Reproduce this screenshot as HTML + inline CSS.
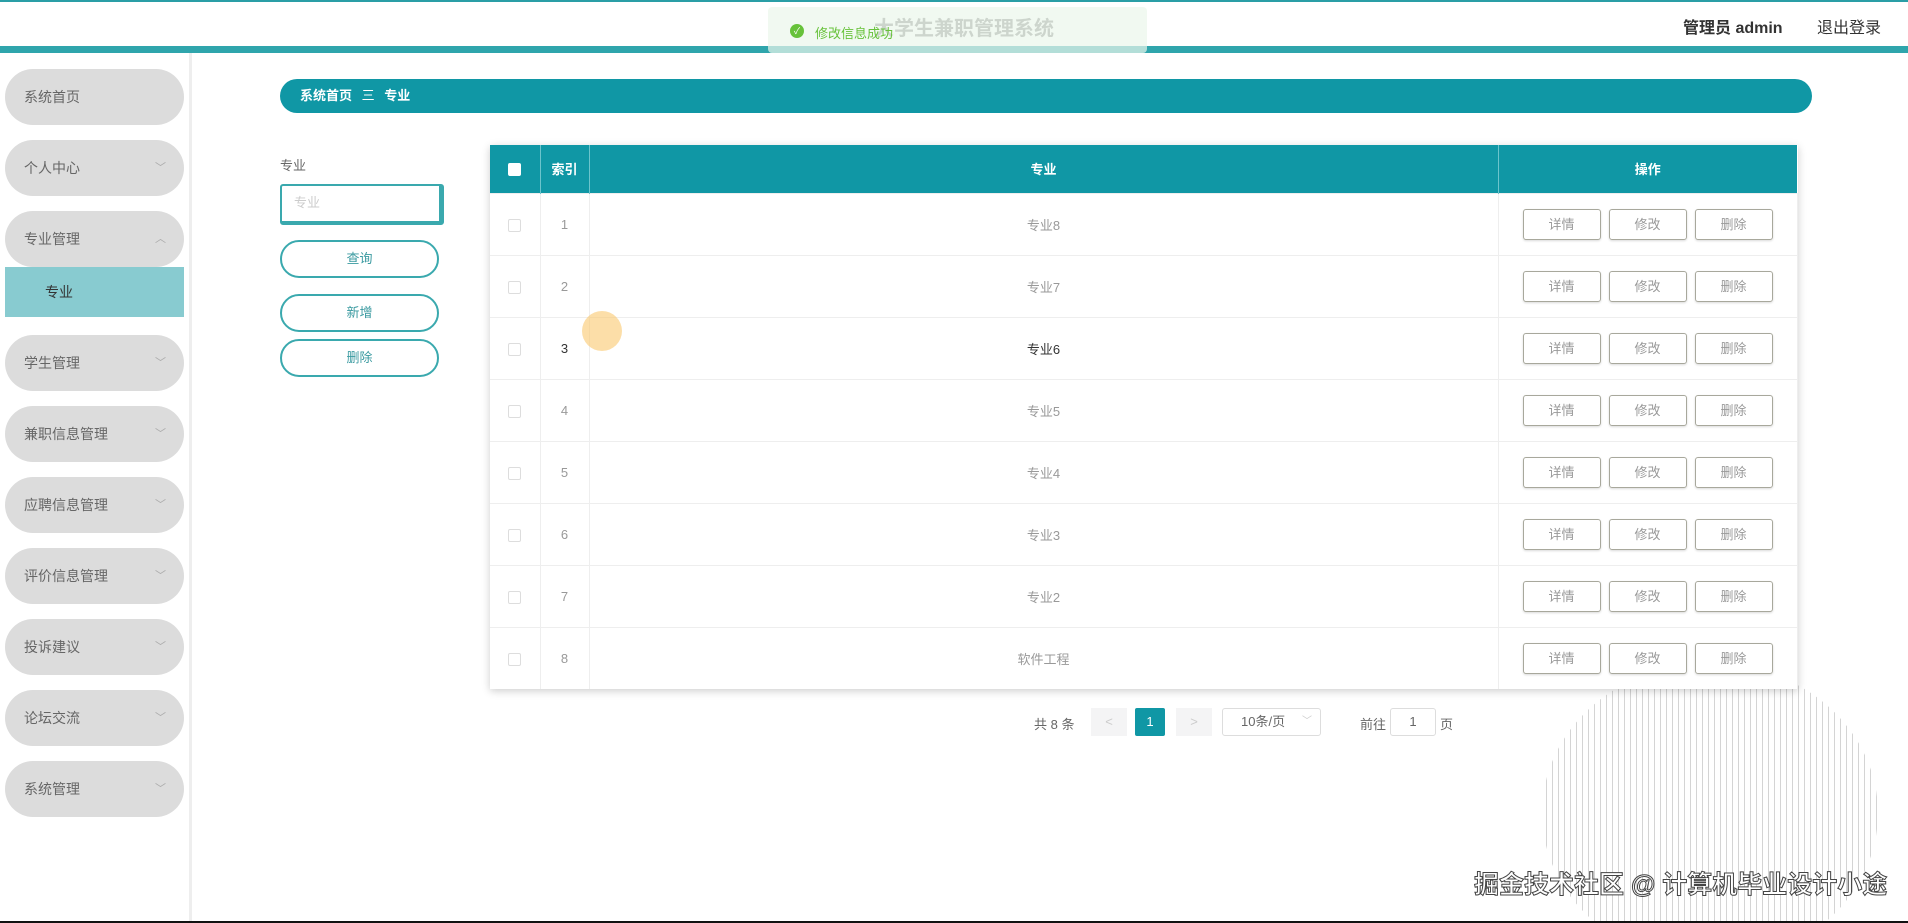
<!DOCTYPE html>
<html style="overflow:hidden;height:923px"><head><meta charset="utf-8"><style>
*{margin:0;padding:0;box-sizing:border-box}
body{width:1908px;height:923px;position:relative;overflow:hidden;background:#fff;font-family:"Liberation Sans","Noto Sans CJK SC",sans-serif;font-size:13px;color:#666}
.a{position:absolute}
.pill{position:absolute;left:5px;width:179px;height:56px;border-radius:28px;background:#dcdcdc;color:#666;font-size:14px;line-height:56px;padding-left:19px}
.pill i{position:absolute;left:150px;top:0;font-style:normal;color:#aaa;font-size:11px}
.btn{position:absolute;left:280px;width:159px;height:38px;border:2px solid #3aa9ae;border-radius:19px;text-align:center;line-height:34px;color:#3a9aa0;font-size:13px}
table{border-collapse:collapse;position:absolute;left:490px;top:145px;width:1307px;box-shadow:0 2px 8px rgba(0,0,0,.2);table-layout:fixed;background:#fff}
th{background:#1097a5;color:#fff;height:48px;font-size:13px;border-right:1px solid #6cc4cc}
td{height:62px;border-top:1px solid #eee;border-right:1px solid #eee;text-align:center;color:#999;font-size:13px}
.cb{display:inline-block;width:13px;height:13px;border:1px solid #ddd;border-radius:2px;vertical-align:middle}
.ob{display:inline-block;width:78px;height:31px;border:1px solid #a8a89c;border-radius:3px;line-height:29px;color:#999;margin:0 4px;box-shadow:0 1px 2px rgba(0,0,0,.15)}
</style></head><body>
<div class="a" style="left:0;top:0;width:1908px;height:2px;background:#2a9ea6"></div>
<div class="a" style="left:0;top:46px;width:1908px;height:7px;background:#2fa5ac"></div>
<div class="a" style="left:874px;top:12px;font-size:20px;color:#888;font-weight:bold">大学生兼职管理系统</div>
<div class="a" style="left:768px;top:7px;width:379px;height:46px;background:rgba(235,247,235,.7);border-radius:4px"></div>
<div class="a" style="left:790px;top:24px;width:14px;height:14px;border-radius:50%;background:#67c23a;color:#fff;font-size:9px;text-align:center;line-height:14px">✓</div>
<div class="a" style="left:815px;top:23px;color:#67c23a;font-size:13px">修改信息成功</div>
<div class="a" style="left:1683px;top:14px;font-size:16px;color:#333;font-weight:bold">管理员 admin</div>
<div class="a" style="left:1817px;top:14px;font-size:16px;color:#333">退出登录</div>

<div class="a" style="left:189px;top:53px;width:3px;height:868px;background:#eee"></div>
<div class="pill" style="top:69px">系统首页</div>
<div class="pill" style="top:140px">个人中心<i>﹀</i></div>
<div class="pill" style="top:211px">专业管理<i>︿</i></div>
<div class="a" style="left:5px;top:267px;width:179px;height:50px;background:#88cbd0;color:#333;font-size:14px;line-height:50px;padding-left:40px">专业</div>
<div class="pill" style="top:335px">学生管理<i>﹀</i></div>
<div class="pill" style="top:406px">兼职信息管理<i>﹀</i></div>
<div class="pill" style="top:477px">应聘信息管理<i>﹀</i></div>
<div class="pill" style="top:548px">评价信息管理<i>﹀</i></div>
<div class="pill" style="top:619px">投诉建议<i>﹀</i></div>
<div class="pill" style="top:690px">论坛交流<i>﹀</i></div>
<div class="pill" style="top:761px">系统管理<i>﹀</i></div>

<div class="a" style="left:280px;top:79px;width:1532px;height:34px;border-radius:17px;background:#1097a5;color:#fff;font-weight:bold;font-size:13px;line-height:34px;padding-left:20px">系统首页 <span style="font-weight:normal;margin:0 6px">三</span> 专业</div>

<div class="a" style="left:280px;top:155px;color:#666;font-size:13px">专业</div>
<div class="a" style="left:280px;top:184px;width:164px;height:41px;border:2px solid #3aa9ae;border-right-width:5px;border-bottom-width:4px;border-radius:3px;color:#ccc;font-size:13px;line-height:34px;padding-left:12px">专业</div>
<div class="btn" style="top:240px">查询</div>
<div class="btn" style="top:294px">新增</div>
<div class="btn" style="top:339px">删除</div>

<div class="a" style="left:1540px;top:663px;width:340px;height:258px;background:repeating-linear-gradient(90deg,#d4d4d4 0 1px,transparent 1px 6px);clip-path:ellipse(168px 150px at 170px 150px)"></div>

<table>
<colgroup><col style="width:50px"><col style="width:49px"><col style="width:909px"><col style="width:299px"></colgroup>
<tr><th><span class="cb" style="background:#fff;border-color:#fff"></span></th><th>索引</th><th>专业</th><th style="border-right:0">操作</th></tr>
<tr><td><span class="cb"></span></td><td>1</td><td>专业8</td><td><span class="ob">详情</span><span class="ob">修改</span><span class="ob">删除</span></td></tr>
<tr><td><span class="cb"></span></td><td>2</td><td>专业7</td><td><span class="ob">详情</span><span class="ob">修改</span><span class="ob">删除</span></td></tr>
<tr><td><span class="cb"></span></td><td style="color:#333">3</td><td style="color:#333">专业6</td><td><span class="ob">详情</span><span class="ob">修改</span><span class="ob">删除</span></td></tr>
<tr><td><span class="cb"></span></td><td>4</td><td>专业5</td><td><span class="ob">详情</span><span class="ob">修改</span><span class="ob">删除</span></td></tr>
<tr><td><span class="cb"></span></td><td>5</td><td>专业4</td><td><span class="ob">详情</span><span class="ob">修改</span><span class="ob">删除</span></td></tr>
<tr><td><span class="cb"></span></td><td>6</td><td>专业3</td><td><span class="ob">详情</span><span class="ob">修改</span><span class="ob">删除</span></td></tr>
<tr><td><span class="cb"></span></td><td>7</td><td>专业2</td><td><span class="ob">详情</span><span class="ob">修改</span><span class="ob">删除</span></td></tr>
<tr><td><span class="cb"></span></td><td>8</td><td>软件工程</td><td><span class="ob">详情</span><span class="ob">修改</span><span class="ob">删除</span></td></tr>
</table>
<div class="a" style="left:582px;top:311px;width:40px;height:40px;border-radius:50%;background:rgba(250,200,110,.6)"></div>

<div class="a" style="left:1034px;top:714px;color:#666">共 8 条</div>
<div class="a" style="left:1091px;top:708px;width:36px;height:28px;background:#f4f4f5;color:#ccc;text-align:center;line-height:28px">&lt;</div>
<div class="a" style="left:1135px;top:708px;width:30px;height:28px;background:#1097a5;color:#fff;text-align:center;line-height:28px;border-radius:2px">1</div>
<div class="a" style="left:1176px;top:708px;width:36px;height:28px;background:#f4f4f5;color:#ccc;text-align:center;line-height:28px">&gt;</div>
<div class="a" style="left:1222px;top:708px;width:99px;height:28px;border:1px solid #ddd;border-radius:3px;line-height:26px;padding-left:18px;color:#666">10条/页<span style="position:absolute;right:8px;color:#ccc;font-size:10px">﹀</span></div>
<div class="a" style="left:1360px;top:714px;color:#666">前往</div>
<div class="a" style="left:1390px;top:708px;width:46px;height:28px;border:1px solid #ddd;border-radius:3px;text-align:center;line-height:26px;color:#666">1</div>
<div class="a" style="left:1440px;top:714px;color:#666">页</div>

<div class="a" style="left:1474px;top:868px;font-size:25px;line-height:34px;color:#fff;-webkit-text-stroke:1px #444;font-weight:bold">掘金技术社区 @ 计算机毕业设计小途</div>
<div class="a" style="left:0;top:921px;width:1908px;height:2px;background:#111"></div>
</body></html>
